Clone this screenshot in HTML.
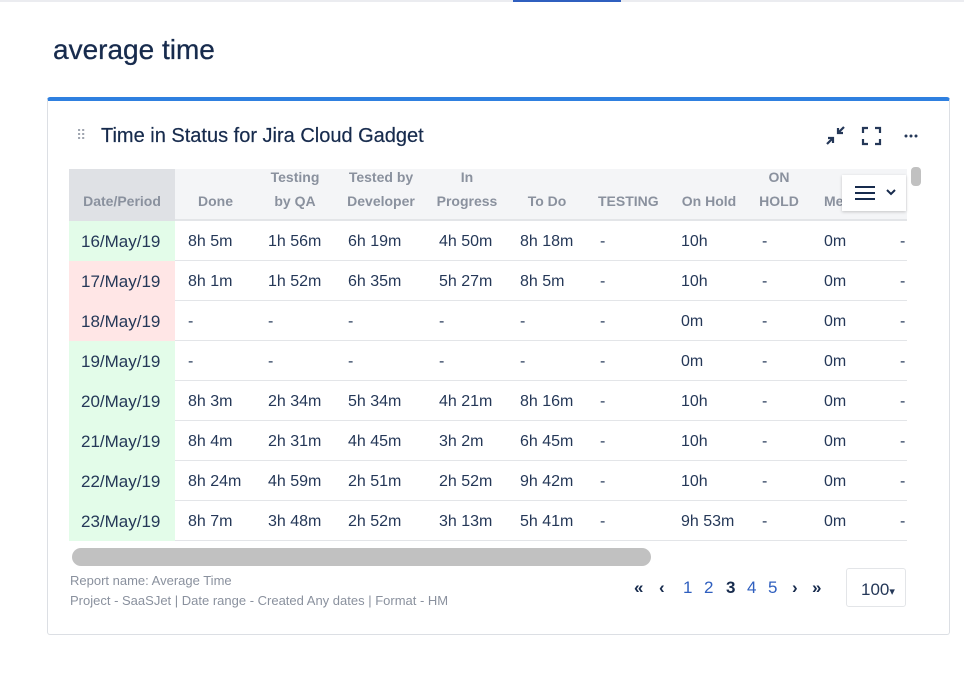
<!DOCTYPE html>
<html><head><meta charset="utf-8"><style>
body{margin:0;width:964px;height:673px;background:#fff;font-family:"Liberation Sans",sans-serif;position:relative;overflow:hidden}
.a{position:absolute;white-space:nowrap}
.hd{color:#8a919e;font-size:14px;font-weight:bold;text-align:center}
.c{font-size:16px;color:#253858}
.p{position:absolute;top:578px;font-size:17px;color:#2f5fbf}
.pb{color:#172b4d;font-weight:bold}
</style></head><body>
<div class="a" style="left:0;top:0;width:964px;height:2px;background:#ebecf0"></div>
<div class="a" style="left:513px;top:0;width:108px;height:2px;background:#2f5fbf"></div>
<div class="a" style="left:53px;top:34px;font-size:28px;color:#172b4d;-webkit-text-stroke:0.3px #172b4d">average time</div>
<div class="a" style="left:47px;top:97px;width:901px;height:533px;border:1px solid #dcdfe4;border-top:4px solid #2f80e0;border-radius:3px;box-sizing:content-box"></div>
<div class="a" style="left:76px;top:127px;color:#a0a6b0;font-size:14px;letter-spacing:-1px">⠿</div>
<div class="a" style="left:101px;top:125px;font-size:20px;color:#172b4d;-webkit-text-stroke:0.2px #172b4d">Time in Status for Jira Cloud Gadget</div>
<svg class="a" style="left:824px;top:124px" width="100" height="24" viewBox="0 0 100 24">
<g stroke="#253858" stroke-width="2.2" fill="none">
<path d="M3 20l6-6M4 14h5v5M20 3l-6 6M14 4v5h5"/>
<path d="M39 9V4h5M51 4h5v5M56 15v5h-5M44 20h-5v-5"/>
</g><g fill="#253858"><circle cx="82" cy="12" r="1.5"/><circle cx="87" cy="12" r="1.5"/><circle cx="92" cy="12" r="1.5"/></g></svg>
<div class="a" style="left:69px;top:169px;width:838px;height:52px;background:#f4f5f7;border-bottom:2px solid #e3e5e8;box-sizing:border-box"></div>
<div class="a" style="left:69px;top:169px;width:106px;height:52px;background:#dfe1e5"></div>
<div class="a hd" style="left:69px;top:193px;width:106px">Date/Period</div>
<div class="a hd" style="left:188px;top:193px;width:55px">Done</div>
<div class="a hd" style="left:262px;top:165px;width:66px;line-height:24px">Testing<br>by QA</div>
<div class="a hd" style="left:342px;top:165px;width:78px;line-height:24px">Tested by<br>Developer</div>
<div class="a hd" style="left:435px;top:165px;width:64px;line-height:24px">In<br>Progress</div>
<div class="a hd" style="left:520px;top:193px;width:54px">To Do</div>
<div class="a hd" style="left:598px;top:193px;width:60px">TESTING</div>
<div class="a hd" style="left:678px;top:193px;width:62px">On Hold</div>
<div class="a hd" style="left:757px;top:165px;width:44px;line-height:24px">ON<br>HOLD</div>
<div class="a hd" style="left:824px;top:193px;width:30px;text-align:left">Me</div>
<div class="a" style="left:842px;top:175px;width:64px;height:36px;background:#fff;box-shadow:0 1px 3px rgba(0,0,0,.2)"></div>
<svg class="a" style="left:853px;top:183px" width="50" height="20"><g stroke="#172b4d" stroke-width="2"><path d="M2 4h20M2 10h20M2 16h20"/><path d="M34 7l4 4 4-4" fill="none"/></g></svg>
<div class="a" style="left:911px;top:167px;width:10px;height:19px;background:#c1c1c1;border-radius:4px"></div>
<div id="rows"></div>
<script>
var d=[["16/May/19","g","8h 5m","1h 56m","6h 19m","4h 50m","8h 18m","-","10h"],
["17/May/19","r","8h 1m","1h 52m","6h 35m","5h 27m","8h 5m","-","10h"],
["18/May/19","r","-","-","-","-","-","-","0m"],
["19/May/19","g","-","-","-","-","-","-","0m"],
["20/May/19","g","8h 3m","2h 34m","5h 34m","4h 21m","8h 16m","-","10h"],
["21/May/19","g","8h 4m","2h 31m","4h 45m","3h 2m","6h 45m","-","10h"],
["22/May/19","g","8h 24m","4h 59m","2h 51m","2h 52m","9h 42m","-","10h"],
["23/May/19","g","8h 7m","3h 48m","2h 52m","3h 13m","5h 41m","-","9h 53m"]];
var xs=[188,268,348,439,520,600,681],h="";
d.forEach(function(r,i){var y=221+i*40;
h+='<div class="a" style="left:69px;top:'+y+'px;width:106px;height:40px;background:'+(r[1]=="g"?"#e3fce9":"#ffe6e6")+'"></div>';
h+='<div class="a" style="left:175px;top:'+(y+39)+'px;width:732px;height:1px;background:#e3e5e8"></div>';
h+='<div class="a c" style="left:81px;top:'+(y+11)+'px;font-size:17px">'+r[0]+'</div>';
for(var j=0;j<7;j++)h+='<div class="a c" style="left:'+xs[j]+'px;top:'+(y+12)+'px">'+r[j+2]+'</div>';
h+='<div class="a c" style="left:762px;top:'+(y+12)+'px">-</div><div class="a c" style="left:824px;top:'+(y+12)+'px">0m</div><div class="a c" style="left:900px;top:'+(y+12)+'px">-</div>';});
document.getElementById('rows').innerHTML=h;
</script>
<div class="a" style="left:72px;top:548px;width:579px;height:18px;background:#c1c1c1;border-radius:9px"></div>
<div class="a" style="left:70px;top:571px;font-size:13px;color:#8a919e;line-height:20px">Report name: Average Time<br>Project - SaaSJet | Date range - Created Any dates | Format - HM</div>
<span class="p pb" style="left:634px">«</span><span class="p pb" style="left:659px">‹</span>
<span class="p" style="left:683px">1</span><span class="p" style="left:704px">2</span><span class="p pb" style="left:726px">3</span><span class="p" style="left:747px">4</span><span class="p" style="left:768px">5</span>
<span class="p pb" style="left:792px">›</span><span class="p pb" style="left:812px">»</span>
<div class="a" style="left:846px;top:568px;width:60px;height:39px;border:1px solid #e3e5e8;border-radius:3px;font-size:17px;color:#253858;line-height:41px;padding-left:14px;box-sizing:border-box">100<span style="font-size:11px">▾</span></div>
</body></html>
